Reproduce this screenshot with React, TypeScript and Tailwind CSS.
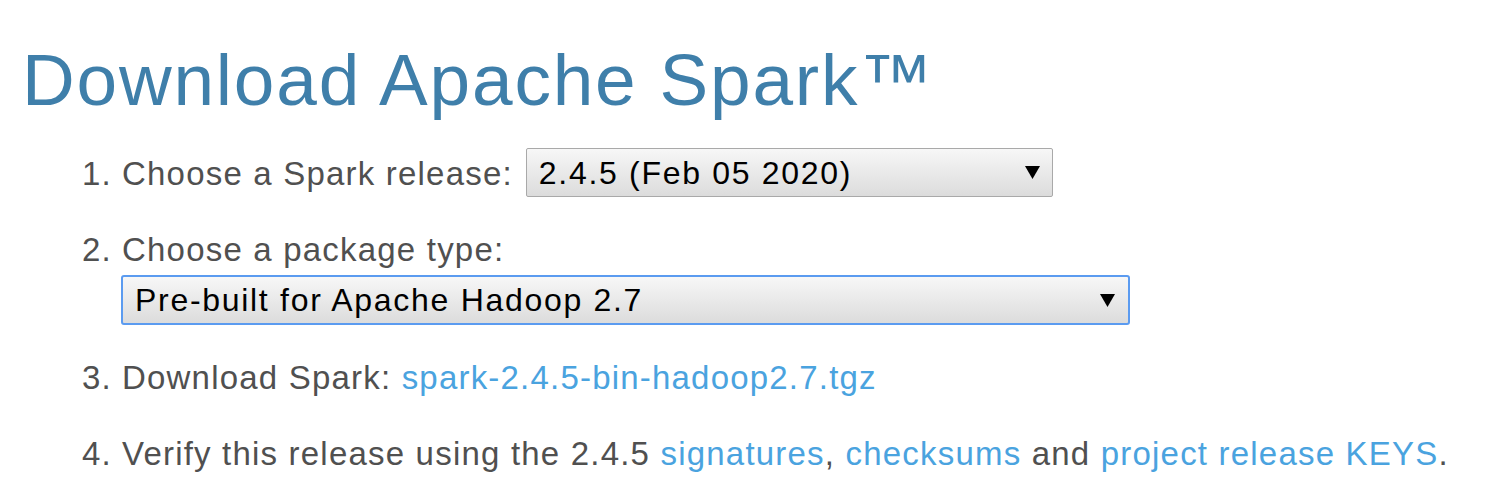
function Arrow() {
  return (
    <svg width="15" height="13" viewBox="0 0 15 13" className="shrink-0">
      <path d="M0 0 L15 0 L7.5 13 Z" fill="#000" />
    </svg>
  );
}

export default function App() {
  const link = "text-[#4aa3df]";
  return (
    <div className="w-[1500px] h-[497px] bg-white overflow-hidden" style={{ fontFamily: '"Liberation Sans", Arial, sans-serif' }}>
      <h1 className="ml-[22px] mt-[38px] text-[73px] leading-[84px] tracking-[1.8px] text-[#3f7faa] font-normal">Download Apache Spark™</h1>
      <ol className="ml-[82px] mt-[26px] text-[33px] leading-[40px] tracking-[1.2px] text-[#505050] flex flex-col">
        <li className="flex items-start h-[49px]">
          <span className="w-[40px] mt-[6px]">1.</span>
          <span className="mt-[6px]">Choose a Spark release:</span>
          <div className="ml-[13px] w-[527px] h-[49px] border border-[#a9a9a9] rounded-[2px] bg-gradient-to-b from-[#f7f7f7] to-[#dcdcdc] flex items-center justify-between pl-[12px] pr-[12px] text-black text-[32px] tracking-[1.7px]">
            <span>2.4.5 (Feb 05 2020)</span>
            <Arrow />
          </div>
        </li>
        <li className="flex flex-col mt-[33px]">
          <div className="flex items-center h-[40px]">
            <span className="w-[40px]">2.</span>
            <span>Choose a package type:</span>
          </div>
          <div className="ml-[39px] mt-[5px] w-[1009px] h-[50px] border-2 border-[#5b9bf0] rounded-[3px] bg-gradient-to-b from-[#f7f7f7] to-[#dcdcdc] flex items-center justify-between pl-[12px] pr-[13px] text-black text-[32px] tracking-[1.7px]">
            <span>Pre-built for Apache Hadoop 2.7</span>
            <Arrow />
          </div>
        </li>
        <li className="flex items-center h-[40px] mt-[33px]">
          <span className="w-[40px]">3.</span>
          <span>Download Spark: <a className={link}>spark-2.4.5-bin-hadoop2.7.tgz</a></span>
        </li>
        <li className="flex items-center h-[40px] mt-[36px]">
          <span className="w-[40px]">4.</span>
          <span>Verify this release using the 2.4.5 <a className={link}>signatures</a>, <a className={link}>checksums</a> and <a className={link}>project release KEYS</a>.</span>
        </li>
      </ol>
    </div>
  );
}
